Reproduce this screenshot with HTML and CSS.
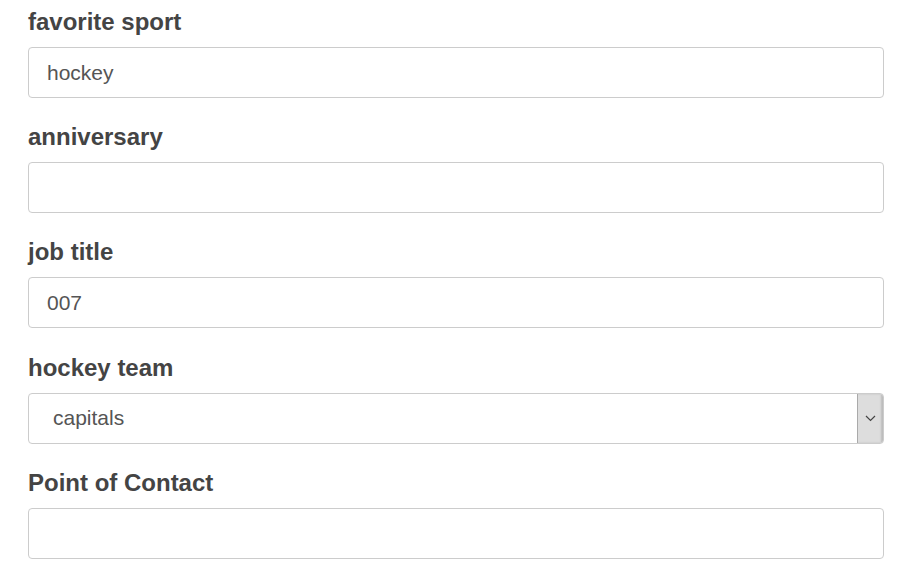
FILE: index.html
```html
<!DOCTYPE html>
<html>
<head>
<meta charset="utf-8">
<link rel="stylesheet" href="styles.css">
</head>
<body>
<form class="form">
  <div class="group">
    <label class="label">favorite sport</label>
    <div class="input">hockey</div>
  </div>
  <div class="group">
    <label class="label">anniversary</label>
    <div class="input"></div>
  </div>
  <div class="group">
    <label class="label">job title</label>
    <div class="input">007</div>
  </div>
  <div class="group">
    <label class="label">hockey team</label>
    <div class="select">
      <span class="select-text">capitals</span>
      <span class="select-arrow">
        <svg width="11" height="7" viewBox="0 0 11 7"><path d="M1 1 L5.5 5.5 L10 1" fill="none" stroke="#444" stroke-width="1.2"/></svg>
      </span>
    </div>
  </div>
  <div class="group">
    <label class="label">Point of Contact</label>
    <div class="input"></div>
  </div>
</form>
</body>
</html>
```
FILE: styles.css
```css
html, body {
  margin: 0;
  padding: 0;
  background: #fff;
}
body {
  font-family: "Liberation Sans", Arial, sans-serif;
  overflow: hidden;
}
.form {
  padding: 9px 29px 0 28px;
  display: flex;
  flex-direction: column;
  gap: 26.2px;
}
.group {
  display: flex;
  flex-direction: column;
}
.label {
  font-size: 24px;
  font-weight: bold;
  color: #444;
  line-height: 26px;
  height: 26px;
  margin-bottom: 12px;
}
.input, .select {
  box-sizing: border-box;
  height: 51px;
  border: 1px solid #ccc;
  border-radius: 4px;
  font-size: 21px;
  color: #555;
  display: flex;
  align-items: center;
  background: #fff;
}
.input {
  padding: 0 18px;
}
.select {
  padding-left: 24px;
  overflow: hidden;
}
.select-text {
  flex: 1;
}
.select-arrow {
  align-self: stretch;
  width: 25px;
  background: #ddd;
  border-left: 1px solid #aaa;
  box-shadow: inset -2px 0 2px rgba(0,0,0,0.15);
  display: flex;
  align-items: center;
  justify-content: center;
}
```
